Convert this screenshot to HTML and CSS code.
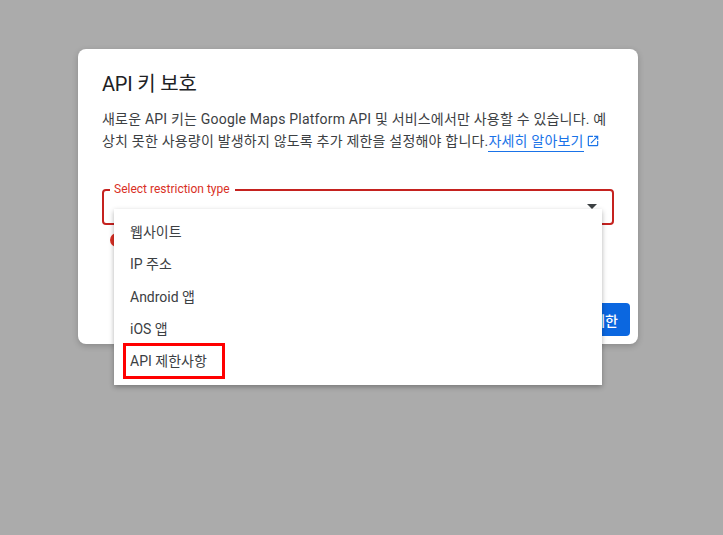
FILE: index.html
```html
<!DOCTYPE html>
<html lang="ko">
<head>
<meta charset="utf-8">
<title>API 키 보호</title>
<link rel="stylesheet" href="styles.css">
</head>
<body>
<div class="dialog">
  <div class="content">
    <h1 class="title">API 키 보호</h1>
    <p class="desc">새로운 API 키는 Google Maps Platform API 및 서비스에서만 사용할 수 있습니다. 예상치 못한 사용량이 발생하지 않도록 추가 제한을 설정해야 합니다.<a class="link" href="#">자세히 알아보기</a><svg class="ext" viewBox="0 0 24 24" width="14" height="14"><path d="M19 19H5V5h7V3H5a2 2 0 0 0-2 2v14a2 2 0 0 0 2 2h14a2 2 0 0 0 2-2v-7h-2v7zM14 3v2h3.59l-9.83 9.83 1.41 1.41L19 6.41V10h2V3h-7z"/></svg></p>
    <div class="field">
      <span class="label">Select restriction type</span>
      <span class="arrow"></span>
    </div>
    <div class="error"><span class="error-dot"></span></div>
  </div>
  <div class="actions"><button class="btn">제한</button></div>
  <ul class="menu">
    <li class="item">웹사이트</li>
    <li class="item">IP 주소</li>
    <li class="item">Android 앱</li>
    <li class="item">iOS 앱</li>
    <li class="item">API 제한사항<span class="mark"></span></li>
  </ul>
</div>
</body>
</html>
```
FILE: styles.css
```css
html, body { margin: 0; height: 100%; }
body {
  background: #ababab;
  font-family: Roboto, "Noto Sans CJK KR", sans-serif;
  padding: 49px 0 0 78px;
  box-sizing: border-box;
  overflow: hidden;
}
.dialog {
  position: relative;
  width: 560px;
  height: 295px;
  background: #fff;
  border-radius: 8px;
  box-shadow: 0 2px 6px rgba(0,0,0,.2);
  display: flex;
  flex-direction: column;
  justify-content: space-between;
}
.content { padding: 22px 24px 0; }
.title {
  margin: 0;
  font-size: 20px;
  font-weight: 400;
  line-height: 26px;
  letter-spacing: -.2px;
  color: #202124;
}
.desc {
  margin: 11px 0 0;
  font-size: 14px;
  line-height: 22px;
  letter-spacing: .2px;
  color: #3c4043;
}
.link {
  color: #1a73e8;
  text-decoration: none;
  border-bottom: 1px solid #1a73e8;
  padding-bottom: 2px;
}
.ext { fill: #1a73e8; margin-left: 2px; vertical-align: -2px; }
.field {
  position: relative;
  margin-top: 37px;
  width: 512px;
  height: 36px;
  box-sizing: border-box;
  border: 2px solid #c5221f;
  border-radius: 4px;
}
.label {
  position: absolute;
  top: -9px;
  left: 6px;
  padding: 0 5px 0 4px;
  background: #fff;
  font-size: 12px;
  line-height: 14px;
  color: #d93025;
}
.arrow {
  position: absolute;
  top: 13px;
  right: 15px;
  border: 5px solid transparent;
  border-top-color: #3c4043;
  border-bottom: 0;
}
.error { margin: 8px 0 0 8px; }
.error-dot {
  display: block;
  width: 14px;
  height: 14px;
  border-radius: 50%;
  background: #d93025;
}
.actions { display: flex; justify-content: flex-end; padding: 0 8px 8px; }
.btn {
  height: 33px;
  padding: 0 12px;
  border: 0;
  border-radius: 4px;
  background: #0b67e0;
  color: #fff;
  font: 500 14px Roboto, "Noto Sans CJK KR", sans-serif;
}
.menu {
  position: absolute;
  left: 36px;
  top: 160px;
  width: 488px;
  height: 176px;
  box-sizing: border-box;
  margin: 0;
  padding: 6px 0 0;
  list-style: none;
  background: #fff;
  box-shadow: 0 2px 5px rgba(0,0,0,.3);
}
.item {
  position: relative;
  height: 32.25px;
  line-height: 34px;
  padding-left: 16px;
  font-size: 14px;
  color: #3c4043;
}
.mark {
  position: absolute;
  left: 9px;
  top: -1px;
  width: 102px;
  height: 36px;
  box-sizing: border-box;
  border: 3px solid #f00;
}
```
